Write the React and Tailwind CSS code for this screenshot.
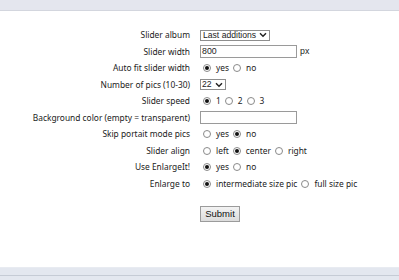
import React from "react";

const Radio = ({ checked }) => (
  <span className="inline-flex items-center justify-center w-[8px] h-[8px] rounded-full border border-[#8a8a8a] bg-white ml-[3px] mr-[5px]">
    {checked && <span className="w-[4px] h-[4px] rounded-full bg-[#111]" />}
  </span>
);

const Opt = ({ checked, label }) => (
  <span className="inline-flex items-center mr-[1px]">
    <Radio checked={checked} />
    <span>{label}</span>
  </span>
);

const Chevron = () => (
  <svg width="8" height="6" viewBox="0 0 8 6" className="ml-[3px]">
    <path d="M1 1.2 L4 4.3 L7 1.2" stroke="#222" strokeWidth="1.4" fill="none" />
  </svg>
);

const arial = "font-['Liberation_Sans',Arial,sans-serif]";

const rows = [
  ["Slider album", (
    <span className={`inline-flex items-center h-[11px] border border-[#8e8e8e] bg-white pl-[2px] pr-[2px] text-[8.6px] text-[#222] ${arial} leading-none`}>
      Last additions<Chevron />
    </span>
  )],
  ["Slider width", (
    <span className="inline-flex items-center">
      <span className={`inline-flex items-center w-[97px] h-[13px] border border-[#9a9a9a] bg-white pl-[1px] text-[8.8px] text-[#222] ${arial} leading-none`}>800</span>
      <span className={`ml-[3px] text-[8.8px] ${arial}`}>px</span>
    </span>
  )],
  ["Auto fit slider width", (<span className="inline-flex items-center"><Opt checked label="yes" /><Opt label="no" /></span>)],
  ["Number of pics (10-30)", (
    <span className={`inline-flex items-center h-[11px] border border-[#8e8e8e] bg-white pl-[1px] pr-[2px] text-[8.6px] text-[#222] ${arial} leading-none`}>
      22<Chevron />
    </span>
  )],
  ["Slider speed", (<span className="inline-flex items-center"><Opt checked label="1" /><Opt label="2" /><Opt label="3" /></span>)],
  ["Background color (empty = transparent)", (
    <span className="inline-block w-[97px] h-[13px] border border-[#9a9a9a] bg-white" />
  )],
  ["Skip portait mode pics", (<span className="inline-flex items-center"><Opt label="yes" /><Opt checked label="no" /></span>)],
  ["Slider align", (<span className="inline-flex items-center"><Opt label="left" /><Opt checked label="center" /><Opt label="right" /></span>)],
  ["Use EnlargeIt!", (<span className="inline-flex items-center"><Opt checked label="yes" /><Opt label="no" /></span>)],
  ["Enlarge to", (<span className="inline-flex items-center"><Opt checked label="intermediate size pic" /><Opt label="full size pic" /></span>)],
];

export default function App() {
  return (
    <div className="w-[399px] h-[280px] bg-white flex flex-col overflow-hidden font-['Noto_Sans',Tahoma,sans-serif] text-[#222]">
      <div className="h-[11px] bg-[#e4e6ee] border-b border-[#d3d6de] shrink-0" />
      <div className="h-[16px] shrink-0" />
      <div className="flex flex-col">
        {rows.map(([label, ctrl], i) => (
          <div key={i} className="flex items-center h-[16.5px]">
            <div className="w-[190px] text-right text-[8.4px] leading-none">{label}</div>
            <div className="ml-[10px] flex items-center text-[8.4px] leading-none">{ctrl}</div>
          </div>
        ))}
      </div>
      <div className="flex pl-[200px] mt-[14px]">
        <button className={`w-[40px] h-[16px] border border-[#9b9b9b] bg-gradient-to-b from-[#f3f3f3] to-[#dcdcdc] text-[9.5px] text-[#111] ${arial} leading-none`}>Submit</button>
      </div>
      <div className="flex-1" />
      <div className="h-[13px] shrink-0 bg-[#e3e7ef] border-t border-[#e8ebf1] flex flex-col">
        <div className="h-[7px]" />
        <div className="h-[1px] bg-[#c5cbd5]" />
      </div>
    </div>
  );
}
